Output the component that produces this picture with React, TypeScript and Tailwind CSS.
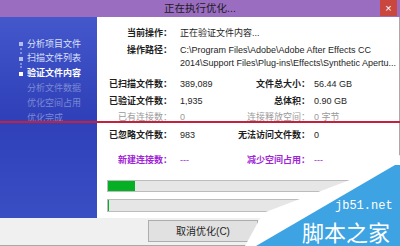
const cjk = "font-['Liberation_Sans','Noto_Sans_CJK_SC',sans-serif]";

const steps = [
  { label: "分析项目文件", state: "done" },
  { label: "扫描文件列表", state: "done" },
  { label: "验证文件内容", state: "current" },
  { label: "分析文件数据", state: "todo" },
  { label: "优化空间占用", state: "todo" },
  { label: "优化完成", state: "todo" },
];

function StepList() {
  return (
    <div className="pt-[20px]">
      {steps.map((step) => (
        <div key={step.label} className="relative flex h-[14.8px] items-center">
          <div className="flex w-[27px] justify-end pr-[4px]">
            {step.state === "done" ? <span className="h-[4px] w-[4px] bg-[#b4bdf0]" /> : null}
            {step.state === "current" ? <span className="h-[4px] w-[4px] bg-white" /> : null}
          </div>
          {step.state === "done" ? (
            <>
              <span className="absolute left-[20px] top-[11px] h-[2px] w-[2px] bg-[#7e8de0]" />
              <span className="absolute left-[20px] top-[14.5px] h-[2px] w-[2px] bg-[#7e8de0]" />
            </>
          ) : null}
          <span
            className={
              step.state === "current"
                ? "text-[9px] font-bold text-white"
                : step.state === "done"
                  ? "text-[9px] text-[#dce1fb]"
                  : "text-[9px] text-[#7c89d4]"
            }
          >
            {step.label}
          </span>
        </div>
      ))}
    </div>
  );
}

function Row({
  label,
  value,
  label2,
  value2,
  tone = "normal",
  className = "",
}: {
  label: string;
  value: string;
  label2: string;
  value2: string;
  tone?: "normal" | "muted" | "accent";
  className?: string;
}) {
  const labelColor = tone === "muted" ? "text-[#9a9a9a] font-normal" : tone === "accent" ? "text-[#a023d6] font-bold" : "text-[#1e1e1e] font-bold";
  const valueColor = tone === "muted" ? "text-[#9a9a9a]" : tone === "accent" ? "text-[#a023d6]" : "text-[#1e1e1e]";
  return (
    <div className={`flex h-[13px] items-center whitespace-nowrap text-[9px] leading-[13px] ${className}`}>
      <span className={`w-[75px] text-right ${labelColor}`}>{label}</span>
      <span className={`ml-[8px] w-[50px] ${valueColor}`}>{value}</span>
      <span className={`w-[80px] text-right ${labelColor}`}>{label2}</span>
      <span className={`ml-[4px] ${valueColor}`}>{value2}</span>
    </div>
  );
}

function Watermark() {
  return (
    <div className="pointer-events-none absolute left-[240px] top-[140px] h-[106px] w-[160px]">
      <svg width="160" height="106" viewBox="0 0 160 106" className="absolute left-0 top-0">
        <polygon points="5,106 23,73 115,38 160,15 160,106" fill="#ffffff" />
        <polygon points="16,106 155,25 160,25 160,106" fill="#3ea3e2" />
      </svg>
      <span className="absolute left-[95px] top-[60px] font-['Liberation_Mono',monospace] text-[12px] leading-[13px] text-white">
        jb51.net
      </span>
      <span className="absolute left-[62px] top-[79px] font-['Noto_Sans_CJK_SC',sans-serif] text-[22px] leading-[24px] text-white">
        脚本之家
      </span>
    </div>
  );
}

export default function App() {
  return (
    <div className={`relative h-[246px] w-[400px] overflow-hidden bg-white ${cjk}`}>
      <div className="relative flex h-[17px] items-center justify-center bg-[#9a6dc1]">
        <span className="text-[10.5px] leading-[17px] text-[#1c1c1c]">正在执行优化...</span>
        <div className="absolute right-[3px] top-0 flex h-[16px] w-[17px] items-center justify-center bg-[#c9473f] text-[11px] leading-none text-white">
          ×
        </div>
      </div>

      <div className="flex h-[201px] border-r border-[#a9a9a9]">
        <div className="w-[97px] bg-[linear-gradient(180deg,#4457cb_0%,#2f40b8_50%,#3a4ec4_100%)]">
          <StepList />
        </div>
        <div className="flex-1 pt-[10px]">
          <div className="flex h-[13px] items-center text-[9px] leading-[13px] text-[#1e1e1e]">
            <span className="w-[75px] text-right font-bold">当前操作：</span>
            <span className="ml-[8px]">正在验证文件内容...</span>
          </div>
          <div className="mt-[4px] flex text-[9px] leading-[13px] text-[#1e1e1e]">
            <span className="w-[75px] shrink-0 text-right font-bold">操作路径：</span>
            <span className="ml-[8px]">
              C:\Program Files\Adobe\Adobe After Effects CC
              <br />
              2014\Support Files\Plug-ins\Effects\Synthetic Apertu...
            </span>
          </div>
          <Row className="mt-[8px]" label="已扫描文件数：" value="389,089" label2="文件总大小：" value2="56.44 GB" />
          <Row className="mt-[4px]" label="已验证文件数：" value="1,935" label2="总体积：" value2="0.90 GB" />
          <Row className="mt-[3px]" tone="muted" label="已有连接数：" value="0" label2="连接释放空间：" value2="0 字节" />
          <Row className="mt-[5px]" label="已忽略文件数：" value="983" label2="无法访问文件数：" value2="0" />
          <Row className="mt-[12px]" tone="accent" label="新建连接数：" value="---" label2="减少空间占用：" value2="---" />

          <div className="ml-[10px] mt-[13px] h-[12px] w-[288px] border border-[#bcbcbc] bg-[#e6e6e6]">
            <div className="h-full w-[27px] bg-[#06b025]" />
          </div>
          <div className="ml-[10px] mt-[7px] h-[13px] w-[288px] border border-[#bcbcbc] bg-[#e6e6e6]">
            <div className="h-full w-[1px] bg-[#06b025]" />
          </div>
        </div>
      </div>

      <div className="h-[28px] border-r border-b border-[#a9a9a9] bg-[#f0f0f0] pt-[2px]">
        <div className="ml-[148px] flex h-[22px] w-[110px] items-center justify-center border border-[#adadad] bg-[#e1e1e1] text-[10px] text-[#1e1e1e]">
          取消优化(C)
        </div>
      </div>

      <div className="pointer-events-none absolute left-0 top-[121px] h-[2px] w-[400px] bg-[#c3213c]" />
      <Watermark />
    </div>
  );
}
